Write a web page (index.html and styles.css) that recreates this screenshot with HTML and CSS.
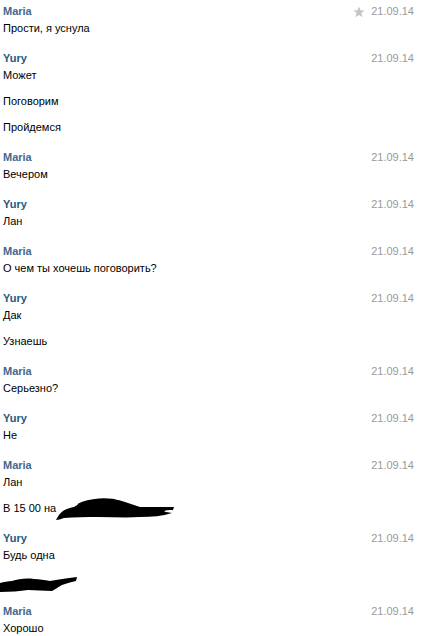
FILE: index.html
```html
<!DOCTYPE html>
<html lang="ru">
<head>
<meta charset="utf-8">
<link rel="stylesheet" href="styles.css">
</head>
<body>
<div class="history">
  <div class="group">
    <div class="head"><span class="name maria">Maria</span><span class="meta"><svg class="star" viewBox="0 0 12 12" width="12" height="12"><path d="M6 0.5 L7.5 4.3 L11.6 4.5 L8.4 7.1 L9.5 11.2 L6 8.9 L2.5 11.2 L3.6 7.1 L0.4 4.5 L4.5 4.3 Z" fill="#c5c5c5"/></svg><span class="date">21.09.14</span></span></div>
    <div class="msg">Прости, я уснула</div>
  </div>
  <div class="group">
    <div class="head"><span class="name yury">Yury</span><span class="meta"><span class="date">21.09.14</span></span></div>
    <div class="msg">Может</div>
    <div class="msg">Поговорим</div>
    <div class="msg">Пройдемся</div>
  </div>
  <div class="group">
    <div class="head"><span class="name maria">Maria</span><span class="meta"><span class="date">21.09.14</span></span></div>
    <div class="msg">Вечером</div>
  </div>
  <div class="group">
    <div class="head"><span class="name yury">Yury</span><span class="meta"><span class="date">21.09.14</span></span></div>
    <div class="msg">Лан</div>
  </div>
  <div class="group">
    <div class="head"><span class="name maria">Maria</span><span class="meta"><span class="date">21.09.14</span></span></div>
    <div class="msg">О чем ты хочешь поговорить?</div>
  </div>
  <div class="group">
    <div class="head"><span class="name yury">Yury</span><span class="meta"><span class="date">21.09.14</span></span></div>
    <div class="msg">Дак</div>
    <div class="msg">Узнаешь</div>
  </div>
  <div class="group">
    <div class="head"><span class="name maria">Maria</span><span class="meta"><span class="date">21.09.14</span></span></div>
    <div class="msg">Серьезно?</div>
  </div>
  <div class="group">
    <div class="head"><span class="name yury">Yury</span><span class="meta"><span class="date">21.09.14</span></span></div>
    <div class="msg">Не</div>
  </div>
  <div class="group">
    <div class="head"><span class="name maria">Maria</span><span class="meta"><span class="date">21.09.14</span></span></div>
    <div class="msg">Лан</div>
    <div class="msg">В 15 00 на <svg class="scribble s1" viewBox="0 0 120 24" width="120" height="24"><path d="M0 23 C2 19 4 16 7 14 C10 12 14 11 18 10 C24 6 30 4 38 3 C48 1 58 2 66 4 C72 6 78 8 84 10 C94 10 104 10 118 10 L117 13 C110 13 106 14 110 15 L116 16 C106 19 96 20 84 20 C70 21 56 20 42 20 C30 20 18 20 8 21 C5 22 2 23 0 23 Z" fill="#000"/><path d="M22 8 C34 2 52 1 64 5" stroke="#000" stroke-width="2.5" fill="none"/></svg></div>
  </div>
  <div class="group">
    <div class="head"><span class="name yury">Yury</span><span class="meta"><span class="date">21.09.14</span></span></div>
    <div class="msg">Будь одна</div>
    <div class="msg"><svg class="scribble s2" viewBox="0 0 78 18" width="78" height="18"><path d="M0 8 C4 7 8 6 12 6 C18 4 26 3 34 4 C40 4 44 5 50 6 C58 5 66 3 77 2 L76 6 C70 7 66 9 62 10 C58 12 56 14 52 16 C44 16 36 15 28 15 C20 16 10 17 0 17 Z" fill="#000"/></svg></div>
  </div>
  <div class="group">
    <div class="head"><span class="name maria">Maria</span><span class="meta"><span class="date">21.09.14</span></span></div>
    <div class="msg">Хорошо</div>
  </div>
</div>
</body>
</html>
```
FILE: styles.css
```css
html, body {
  margin: 0;
  padding: 0;
  background: #ffffff;
}
body {
  font-family: "Liberation Sans", Arial, sans-serif;
  font-size: 11px;
  color: #000000;
}
.history {
  width: 411px;
  padding-left: 3px;
}
.group {
  padding: 3px 0 10px;
}
.head {
  display: flex;
  justify-content: space-between;
  align-items: center;
  height: 17px;
  line-height: 17px;
}
.name {
  font-weight: bold;
}
.maria { color: #45688e; }
.yury { color: #2b587a; }
.meta {
  display: flex;
  align-items: center;
  gap: 6px;
}
.date {
  color: #999999;
}
.star {
  display: block;
}
.msg {
  line-height: 17px;
  height: 17px;
  display: flex;
  align-items: center;
}
.msg + .msg {
  margin-top: 9px;
}
.scribble {
  display: block;
}
.s1 {
  margin-top: 1px;
}
.s2 {
  margin-left: -3px;
  margin-top: 4px;
}
```
